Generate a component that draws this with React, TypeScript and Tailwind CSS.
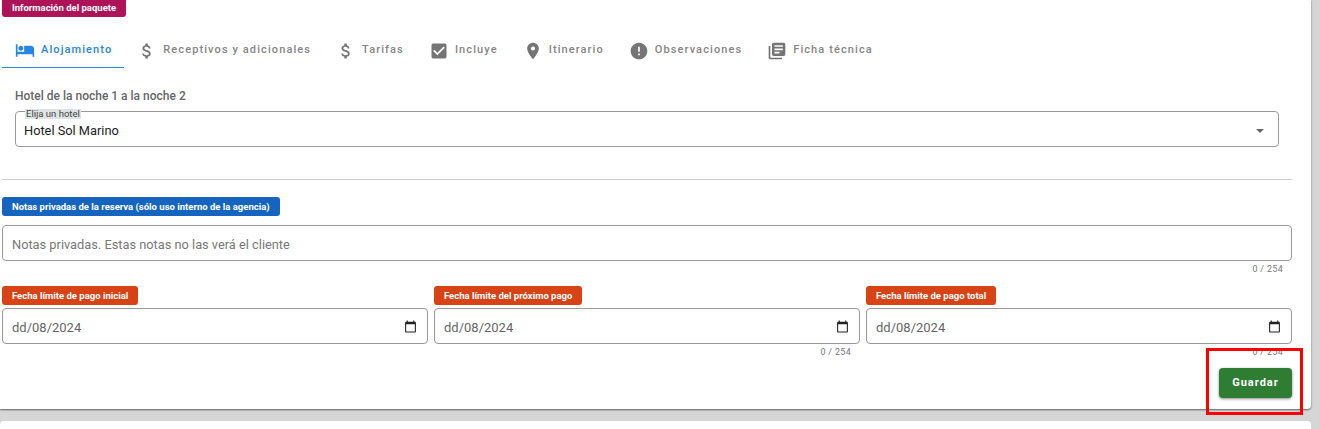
import { MdAttachMoney, MdCheckBox, MdError, MdHotel, MdLibraryBooks, MdPlace } from "react-icons/md";

const tabs = [
  { label: "Alojamiento", icon: MdHotel, active: true },
  { label: "Receptivos y adicionales", icon: MdAttachMoney },
  { label: "Tarifas", icon: MdAttachMoney },
  { label: "Incluye", icon: MdCheckBox },
  { label: "Itinerario", icon: MdPlace },
  { label: "Observaciones", icon: MdError },
  { label: "Ficha técnica", icon: MdLibraryBooks },
];

const dates = [
  { label: "Fecha límite de pago inicial", counter: false },
  { label: "Fecha límite del próximo pago", counter: true },
  { label: "Fecha límite de pago total", counter: true },
];

const Badge = ({ text, color }: { text: string; color: string }) => (
  <div className={`w-fit h-[19px] px-[10px] rounded-[3px] text-white text-[9.5px] font-bold leading-[19px] whitespace-nowrap ${color}`}>
    {text}
  </div>
);

const Counter = () => (
  <div className="h-[17px] pr-[9px] text-right text-[9px] leading-[17px] tracking-[0.3px] text-[#777]">0 / 254</div>
);

const CalendarIcon = () => (
  <svg viewBox="0 0 24 24" className="w-[13px] h-[13px] mt-[1px] fill-[#222]">
    <path d="M20 3h-1V1h-2v2H7V1H5v2H4c-1.1 0-2 .9-2 2v16c0 1.1.9 2 2 2h16c1.1 0 2-.9 2-2V5c0-1.1-.9-2-2-2zm0 18H4V8h16v13z" />
  </svg>
);

export default function App() {
  return (
    <div className="relative h-[429px] overflow-hidden bg-[#d6d6d7] font-['Roboto',sans-serif]">
      <div className="w-[1311px] h-[409px] bg-white rounded-br-[4px] pl-[2px] pr-[19px] flex flex-col shadow-[0_1px_2px_rgba(0,0,0,0.55)]">
        <div className="-mt-[2px]">
          <Badge text="Información del paquete" color="bg-[#ad1457]" />
        </div>

        <div className="flex h-[38px] mt-[13px]">
          {tabs.map((tab) => (
            <div
              key={tab.label}
              className={`flex items-center gap-[6px] pt-[3px] pl-[13px] pr-[12px] text-[11px] font-medium tracking-[1.1px] whitespace-nowrap ${
                tab.active ? "text-[#2587e0] border-b border-[#2587e0]" : "text-[#757575]"
              }`}
            >
              <tab.icon className="w-[20px] h-[20px] shrink-0" />
              <span className={tab.active ? "" : "text-[#858585]"}>{tab.label}</span>
            </div>
          ))}
        </div>

        <div className="pl-[13px] pr-[13px] mt-[21px]">
          <div className="text-[12px] font-medium leading-[14px] text-[#666]">Hotel de la noche 1 a la noche 2</div>
          <div className="relative mt-[8px] h-[36px] border border-[#999] rounded-[4px] flex items-center justify-between pt-[3px] pl-[8px] pr-[14px]">
            <span className="text-[12.8px] text-[#222]">Hotel Sol Marino</span>
            <span className="w-0 h-0 border-x-[4px] border-x-transparent border-t-[4px] border-t-[#666]" />
            <span className="absolute left-[9px] -top-[3px] px-[1px] bg-[#dfe3e3] text-[9.5px] leading-[10px] text-[#444]">
              Elija un hotel
            </span>
          </div>
        </div>

        <hr className="mt-[32px] border-t border-[#ccc]" />

        <div className="mt-[17px] flex flex-col">
          <Badge text="Notas privadas de la reserva (sólo uso interno de la agencia)" color="bg-[#1565c0]" />
          <div className="mt-[9px] h-[36px] border border-[#999] rounded-[4px] flex items-center pt-[3px] pl-[9px] text-[12.8px] text-[#777]">
            Notas privadas. Estas notas no las verá el cliente
          </div>
          <Counter />
        </div>

        <div className="mt-[8px] grid grid-cols-3 gap-[6px]">
          {dates.map((date) => (
            <div key={date.label} className="flex flex-col">
              <Badge text={date.label} color="bg-[#d84315]" />
              <div className="mt-[3px] h-[36px] border border-[#999] rounded-[4px] flex items-center justify-between pl-[9px] pr-[10px] text-[13px] text-[#666]">
                <span className="pt-[3px]">dd/08/2024</span>
                <CalendarIcon />
              </div>
              {date.counter && <Counter />}
            </div>
          ))}
        </div>

        <div className="mt-[7px] flex justify-end">
          <button className="w-[73px] h-[30px] bg-[#2e7d32] rounded-[4px] text-white text-[11px] font-bold tracking-[1px] shadow-[0_1px_3px_rgba(0,0,0,0.45)]">
            Guardar
          </button>
        </div>
      </div>

      <div className="mt-[12px] w-[1311px] h-[20px] bg-white rounded-t-[4px]" />

      {/* recuadro rojo marcado encima de la captura */}
      <div className="absolute left-[1206px] top-[348px] w-[97px] h-[67px] border-[3px] border-[#ff0000]" />
    </div>
  );
}
